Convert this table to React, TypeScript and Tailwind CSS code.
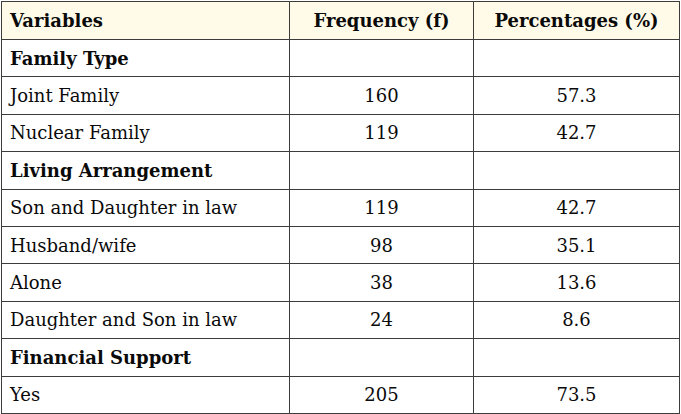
const rows: { label: string; f?: string; p?: string; group?: boolean }[] = [
  { label: 'Family Type', group: true },
  { label: 'Joint Family', f: '160', p: '57.3' },
  { label: 'Nuclear Family', f: '119', p: '42.7' },
  { label: 'Living Arrangement', group: true },
  { label: 'Son and Daughter in law', f: '119', p: '42.7' },
  { label: 'Husband/wife', f: '98', p: '35.1' },
  { label: 'Alone', f: '38', p: '13.6' },
  { label: 'Daughter and Son in law', f: '24', p: '8.6' },
  { label: 'Financial Support', group: true },
  { label: 'Yes', f: '205', p: '73.5' },
]

export default function App() {
  return (
    <div
      className="w-[681px] h-[414px] overflow-hidden bg-white pl-px pt-px"
      style={{ fontFamily: '"DejaVu Serif", serif' }}
    >
      <table className="w-[679px] border-collapse text-[18px] text-[#0a0a0a]">
        <colgroup>
          <col className="w-[288px]" />
          <col className="w-[184px]" />
          <col />
        </colgroup>
        <thead>
          <tr className="h-[38px] bg-[#fffbe8]">
            <th className="border border-[#3c3c3c] px-[8px] text-left font-bold">Variables</th>
            <th className="border border-[#3c3c3c] text-center font-bold">Frequency (f)</th>
            <th className="border border-[#3c3c3c] text-center font-bold">Percentages (%)</th>
          </tr>
        </thead>
        <tbody>
          {rows.map((r) => (
            <tr key={r.label} className="h-[37.4px]">
              <td className={`border border-[#3c3c3c] px-[8px] ${r.group ? 'font-bold' : ''}`}>{r.label}</td>
              <td className="border border-[#3c3c3c] text-center">{r.f}</td>
              <td className="border border-[#3c3c3c] text-center">{r.p}</td>
            </tr>
          ))}
        </tbody>
      </table>
    </div>
  )
}
